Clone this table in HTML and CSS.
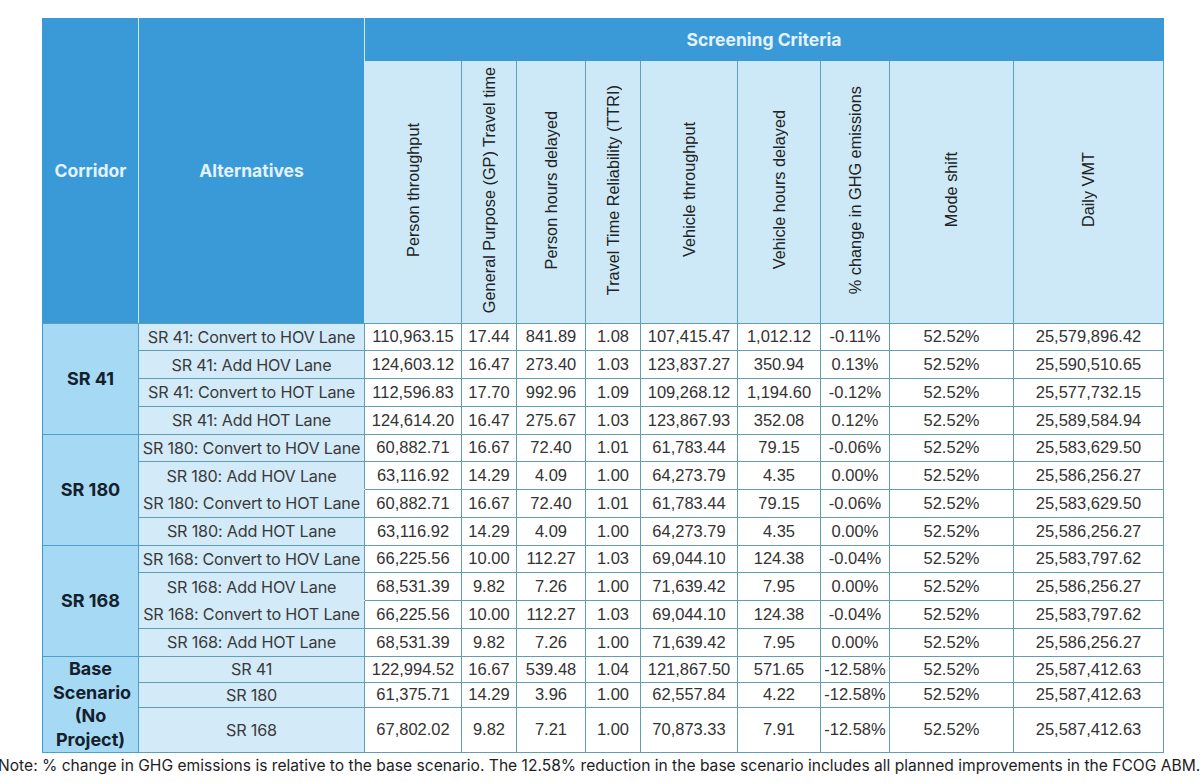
FILE: index.html
```html
<!DOCTYPE html>
<html lang="en">
<head>
    <meta charset="UTF-8">
    <title>Screening Criteria</title>
    <link rel="stylesheet" href="styles.css">
</head>
<body>
    <!-- Screening table -->
    <table class="screening">
        <colgroup>
            <col class="w-corr">
            <col class="w-alt">
            <col class="w-pt">
            <col class="w-gp">
            <col class="w-phd">
            <col class="w-ttri">
            <col class="w-vt">
            <col class="w-vhd">
            <col class="w-ghg">
            <col class="w-mode">
            <col class="w-vmt">
        </colgroup>
        <thead>
            <tr class="head-top">
                <th rowspan="2" class="head-main">Corridor</th>
                <th rowspan="2" class="head-main">Alternatives</th>
                <th colspan="9" class="head-group">Screening Criteria</th>
            </tr>
            <tr class="head-sub">
                <th><span class="rot">Person throughput</span></th>
                <th><span class="rot">General Purpose (GP) Travel time</span></th>
                <th><span class="rot">Person hours delayed</span></th>
                <th><span class="rot">Travel Time Reliability (TTRI)</span></th>
                <th><span class="rot">Vehicle throughput</span></th>
                <th><span class="rot">Vehicle hours delayed</span></th>
                <th><span class="rot">% change in GHG emissions</span></th>
                <th><span class="rot">Mode shift</span></th>
                <th><span class="rot">Daily VMT</span></th>
            </tr>
        </thead>
        <tbody>
            <tr>
                <td rowspan="4" class="corr">SR 41</td>
                <td class="alt">SR 41: Convert to HOV Lane</td>
                <td>110,963.15</td><td>17.44</td><td>841.89</td><td>1.08</td><td>107,415.47</td><td>1,012.12</td><td>-0.11%</td><td>52.52%</td><td>25,579,896.42</td>
            </tr>
            <tr>
                <td class="alt">SR 41: Add HOV Lane</td>
                <td>124,603.12</td><td>16.47</td><td>273.40</td><td>1.03</td><td>123,837.27</td><td>350.94</td><td>0.13%</td><td>52.52%</td><td>25,590,510.65</td>
            </tr>
            <tr>
                <td class="alt">SR 41: Convert to HOT Lane</td>
                <td>112,596.83</td><td>17.70</td><td>992.96</td><td>1.09</td><td>109,268.12</td><td>1,194.60</td><td>-0.12%</td><td>52.52%</td><td>25,577,732.15</td>
            </tr>
            <tr>
                <td class="alt">SR 41: Add HOT Lane</td>
                <td>124,614.20</td><td>16.47</td><td>275.67</td><td>1.03</td><td>123,867.93</td><td>352.08</td><td>0.12%</td><td>52.52%</td><td>25,589,584.94</td>
            </tr>

            <tr>
                <td rowspan="4" class="corr">SR 180</td>
                <td class="alt">SR 180: Convert to HOV Lane</td>
                <td>60,882.71</td><td>16.67</td><td>72.40</td><td>1.01</td><td>61,783.44</td><td>79.15</td><td>-0.06%</td><td>52.52%</td><td>25,583,629.50</td>
            </tr>
            <tr>
                <td class="alt no-line">SR 180: Add HOV Lane</td>
                <td>63,116.92</td><td>14.29</td><td>4.09</td><td>1.00</td><td>64,273.79</td><td>4.35</td><td>0.00%</td><td>52.52%</td><td>25,586,256.27</td>
            </tr>
            <tr>
                <td class="alt">SR 180: Convert to HOT Lane</td>
                <td>60,882.71</td><td>16.67</td><td>72.40</td><td>1.01</td><td>61,783.44</td><td>79.15</td><td>-0.06%</td><td>52.52%</td><td>25,583,629.50</td>
            </tr>
            <tr>
                <td class="alt">SR 180: Add HOT Lane</td>
                <td>63,116.92</td><td>14.29</td><td>4.09</td><td>1.00</td><td>64,273.79</td><td>4.35</td><td>0.00%</td><td>52.52%</td><td>25,586,256.27</td>
            </tr>

            <tr>
                <td rowspan="4" class="corr">SR 168</td>
                <td class="alt">SR 168: Convert to HOV Lane</td>
                <td>66,225.56</td><td>10.00</td><td>112.27</td><td>1.03</td><td>69,044.10</td><td>124.38</td><td>-0.04%</td><td>52.52%</td><td>25,583,797.62</td>
            </tr>
            <tr>
                <td class="alt no-line">SR 168: Add HOV Lane</td>
                <td>68,531.39</td><td>9.82</td><td>7.26</td><td>1.00</td><td>71,639.42</td><td>7.95</td><td>0.00%</td><td>52.52%</td><td>25,586,256.27</td>
            </tr>
            <tr>
                <td class="alt">SR 168: Convert to HOT Lane</td>
                <td>66,225.56</td><td>10.00</td><td>112.27</td><td>1.03</td><td>69,044.10</td><td>124.38</td><td>-0.04%</td><td>52.52%</td><td>25,583,797.62</td>
            </tr>
            <tr>
                <td class="alt">SR 168: Add HOT Lane</td>
                <td>68,531.39</td><td>9.82</td><td>7.26</td><td>1.00</td><td>71,639.42</td><td>7.95</td><td>0.00%</td><td>52.52%</td><td>25,586,256.27</td>
            </tr>

            <tr class="base-1">
                <td rowspan="3" class="corr base">Base Scenario (No Project)</td>
                <td class="alt">SR 41</td>
                <td>122,994.52</td><td>16.67</td><td>539.48</td><td>1.04</td><td>121,867.50</td><td>571.65</td><td>-12.58%</td><td>52.52%</td><td>25,587,412.63</td>
            </tr>
            <tr class="base-2">
                <td class="alt">SR 180</td>
                <td>61,375.71</td><td>14.29</td><td>3.96</td><td>1.00</td><td>62,557.84</td><td>4.22</td><td>-12.58%</td><td>52.52%</td><td>25,587,412.63</td>
            </tr>
            <tr class="base-3">
                <td class="alt">SR 168</td>
                <td>67,802.02</td><td>9.82</td><td>7.21</td><td>1.00</td><td>70,873.33</td><td>7.91</td><td>-12.58%</td><td>52.52%</td><td>25,587,412.63</td>
            </tr>
        </tbody>
    </table>

    <!-- Footnote -->
    <p class="note">Note: % change in GHG emissions is relative to the base scenario. The 12.58% reduction in the base scenario includes all planned improvements in the FCOG ABM.</p>
</body>
</html>
```

FILE: styles.css
```css
/* General */
body {
    margin: 0;
    background-color: #fff;
    color: #2b2b2b;
    font-family: "Liberation Sans", Arial, sans-serif;
}

/* Table */
.screening {
    margin: 18px 0 0 42px;
    width: 1121px;
    table-layout: fixed;
    border-collapse: collapse;
}

.w-corr { width: 96px; }
.w-alt  { width: 226px; }
.w-pt   { width: 97px; }
.w-gp   { width: 55px; }
.w-phd  { width: 69px; }
.w-ttri { width: 55px; }
.w-vt   { width: 97px; }
.w-vhd  { width: 83px; }
.w-ghg  { width: 69px; }
.w-mode { width: 124px; }
.w-vmt  { width: 150px; }

/* Header */
.head-top {
    height: 43px;
}

.head-sub {
    height: 262px;
}

.head-main,
.head-group {
    background-color: #3a9ad8;
    color: #e4f2fb;
    font-family: Inter, "Liberation Sans", sans-serif;
    font-weight: 700;
    font-size: 17.5px;
    padding: 0;
}

.head-main {
    border-left: 1px solid #cfe8f7;
    border-right: 1px solid #cfe8f7;
    border-bottom: 1px solid #5b9fb3;
}

.head-main:first-child {
    border-left: 1px solid #3a9ad8;
}

.head-group {
    border-right: 1px solid #3a9ad8;
}

.head-sub th {
    background-color: #cde9f8;
    border: 1px solid #5f9fb1;
    border-top: none;
    padding: 0;
    vertical-align: middle;
    text-align: center;
    font-weight: 400;
    font-size: 16.3px;
    color: #222;
}

.rot {
    display: inline-block;
    writing-mode: vertical-rl;
    transform: rotate(180deg);
    white-space: nowrap;
}

/* Body */
tbody tr {
    height: 27.75px;
}

tbody td {
    border: 1px solid #5f9fb1;
    padding: 0;
    text-align: center;
    font-size: 16.5px;
    color: #333;
    background-color: #fff;
    white-space: nowrap;
}

tbody td.alt {
    background-color: #d3ebf9;
    font-family: Inter, "Liberation Sans", sans-serif;
    font-size: 16.2px;
    color: #3a3a3a;
    letter-spacing: -0.2px;
}

tbody td.no-line {
    border-bottom-color: #d3ebf9;
}

tbody td.corr {
    background-color: #a6d9f3;
    border-left: 1px solid #3a9ad8;
    border-right: 1px solid #4a9fcd;
    border-bottom: 1px solid #4a9fcd;
    font-family: Inter, "Liberation Sans", sans-serif;
    font-weight: 700;
    font-size: 18px;
    color: #14202b;
    white-space: normal;
}

tbody td.base {
    padding: 0 10px;
    line-height: 23.5px;
}

.base-1 { height: 26px; }
.base-2 { height: 25px; }
.base-3 { height: 45px; }

/* Note */
.note {
    margin: 3px 0 0 -2px;
    font-family: Inter, "Liberation Sans", sans-serif;
    font-size: 15.6px;
    color: #1e1e1e;
    white-space: nowrap;
}
```
